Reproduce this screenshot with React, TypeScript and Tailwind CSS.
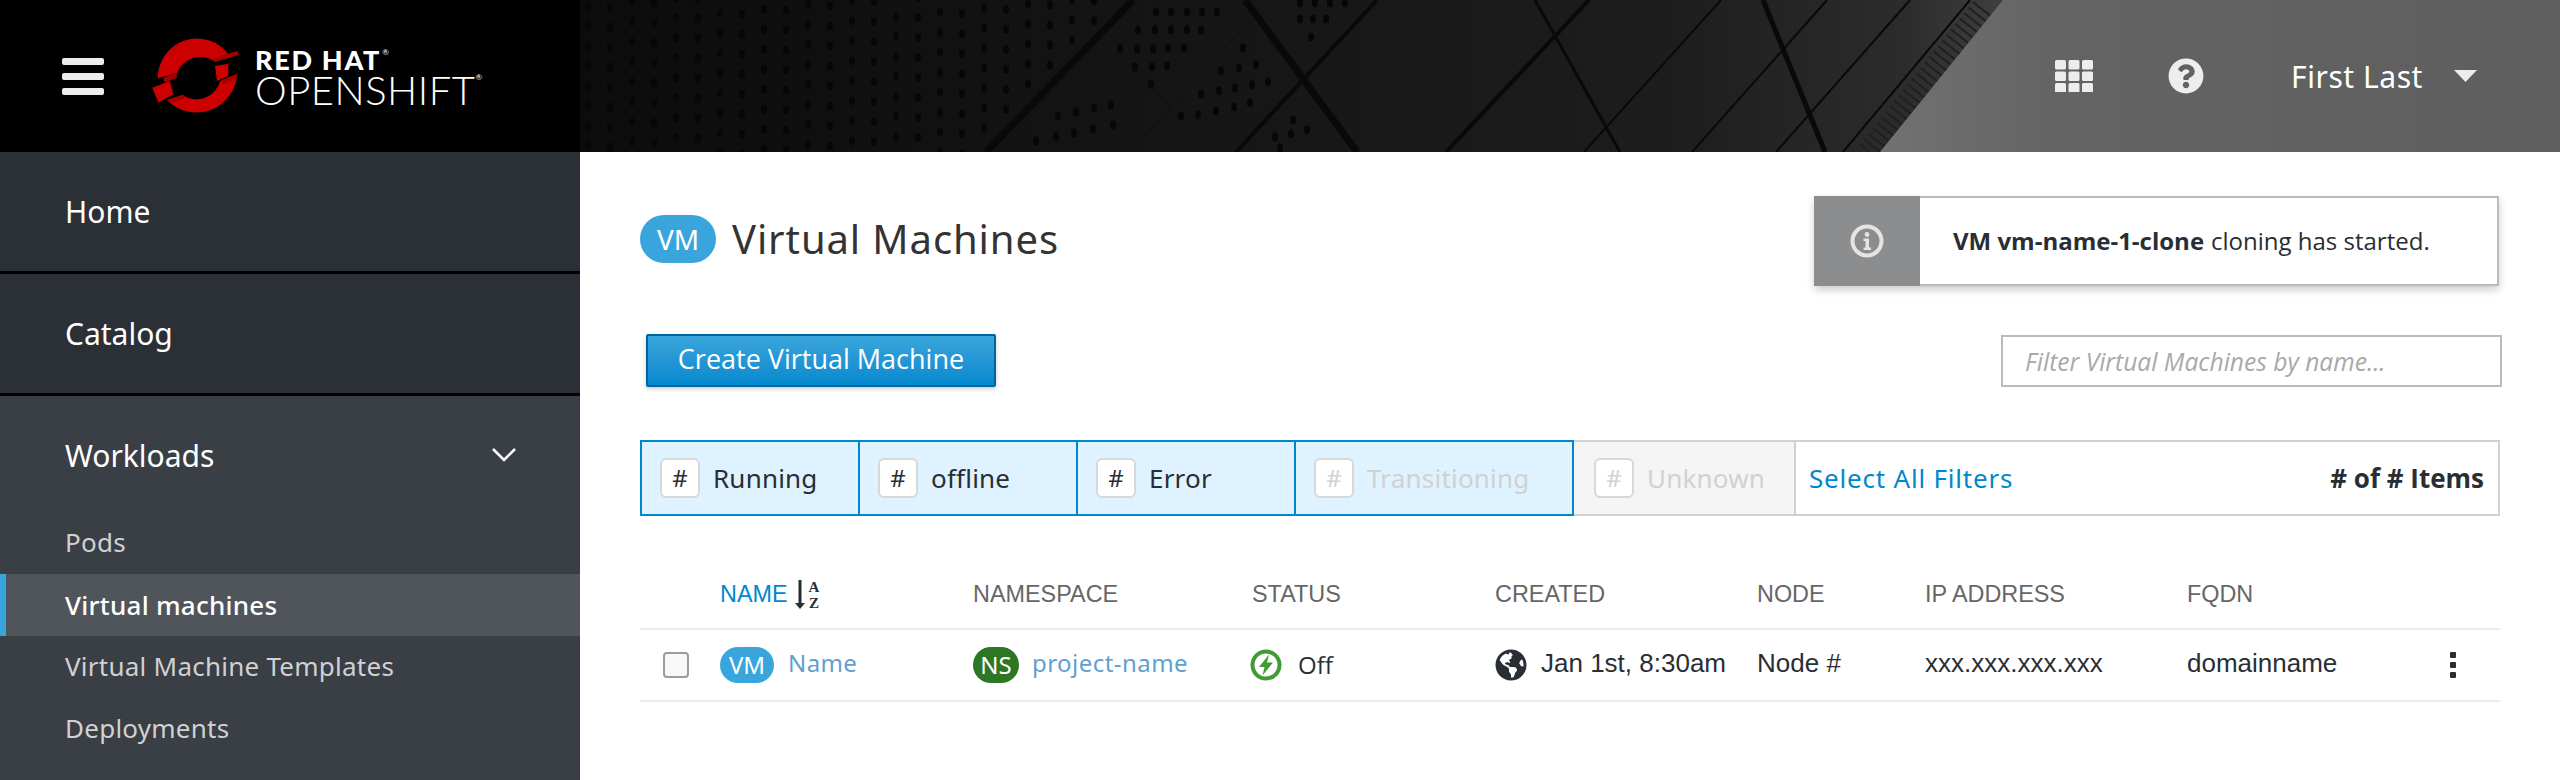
import { FaGlobeAmericas, FaQuestionCircle } from "react-icons/fa";

const uiFont = "font-['Noto_Sans',sans-serif]";
const bodyFont = "font-['Open_Sans',sans-serif]";
const tableFont = "font-['Liberation_Sans',Arial,sans-serif]";

// perforated panel, left of the first thick seam
const panelDots: Array<[number, number]> = [];
for (let col = 0; col < 26; col++) {
  for (let row = -1; row < 11; row++) {
    const x = 588 + col * 22;
    const y = 6 + row * 20 - col * 2.1 + (col % 2) * 3;
    if (y > -4 && y < 156 && x < 1122 - y * 0.97) panelDots.push([x, y]);
  }
}

// dot clusters between the seams, read off the reference
const clusterDots: Array<[number, number]> = [
  [1156, 12], [1171, 12], [1187, 12], [1202, 12], [1217, 12],
  [1138, 30], [1155, 30], [1171, 30], [1187, 30], [1201, 30],
  [1120, 49], [1137, 49], [1153, 49], [1168, 48], [1184, 48],
  [1135, 67], [1152, 67], [1167, 66],
  [1151, 84], [1243, 48], [1221, 71], [1239, 68], [1256, 65],
  [1201, 94], [1219, 91], [1235, 88], [1252, 85], [1268, 82],
  [1198, 115], [1216, 111], [1234, 107], [1250, 103], [1181, 116],
  [1058, 116], [1076, 112], [1094, 108], [1113, 125], [1111, 105],
  [1036, 141], [1056, 137], [1074, 133], [1093, 129],
  [1300, 3], [1315, 3], [1330, 3], [1345, 3], [1300, 19], [1313, 19], [1326, 19], [1311, 37],
  [1293, 120], [1275, 137], [1291, 134], [1307, 130], [1280, 148],
];

const seams: Array<[number, number, number, number, number]> = [
  [1133, 0, 986, 152, 7],
  [1245, 0, 1357, 152, 7],
  [1377, 0, 1236, 152, 4],
  [1589, 0, 1446, 152, 4],
  [1535, 0, 1620, 152, 3],
  [1721, 0, 1584, 152, 2],
  [1763, 0, 1825, 152, 5],
  [1827, 0, 1692, 152, 2],
  [1910, 0, 1776, 152, 2],
  [1970, 0, 1843, 152, 2],
];

function HeaderBackdrop() {
  return (
    <svg className="absolute inset-0 h-full w-full" viewBox="580 0 1980 152" preserveAspectRatio="none" aria-hidden="true">
      <defs>
        <linearGradient id="building" x1="0" x2="1" y1="0" y2="0">
          <stop offset="0" stopColor="#0c0c0c" />
          <stop offset="0.3" stopColor="#151515" />
          <stop offset="0.55" stopColor="#1d1d1d" />
          <stop offset="0.67" stopColor="#2c2c2c" />
          <stop offset="0.72" stopColor="#3f3f3f" />
          <stop offset="1" stopColor="#555555" />
        </linearGradient>
        <linearGradient id="sky" x1="0" x2="1" y1="0" y2="0">
          <stop offset="0" stopColor="#727272" />
          <stop offset="0.25" stopColor="#646464" />
          <stop offset="1" stopColor="#5e5e5e" />
        </linearGradient>
      </defs>
      <rect x="580" y="0" width="1980" height="152" fill="url(#building)" />
      {panelDots.concat(clusterDots).map(([x, y]) => (
        <ellipse key={`${x}-${y}`} cx={x} cy={y} rx="3" ry="4.4" fill="#070707" />
      ))}
      {seams.map(([x1, y1, x2, y2, w]) => (
        <line key={x1} x1={x1} y1={y1} x2={x2} y2={y2} stroke="#090909" strokeWidth={w} />
      ))}
      <line x1="1130" y1="62" x2="1210" y2="152" stroke="#101010" strokeWidth="1" />
      <line x1="1250" y1="20" x2="1130" y2="152" stroke="#101010" strokeWidth="1" />
      <line x1="1982" y1="8" x2="1868" y2="152" stroke="#202020" strokeWidth="22" strokeDasharray="2 5" />
      <polygon points="2003,0 1880,152 2560,152 2560,0" fill="url(#sky)" />
    </svg>
  );
}

function Logo() {
  return (
    <svg className="h-[90px] w-[100px] shrink-0" viewBox="0 0 300 270" aria-hidden="true">
      <path d="M38 142A118 120 0 0 1 250 70L210 92A75 75 0 0 0 96 126Z" fill="#cc0000" />
      <path d="M276 128A122 122 0 0 1 66 207L112 192A75 75 0 0 0 226 150Z" fill="#cc0000" />
      <polygon points="210,105 250,98 250,135 216,150" fill="#cc0000" />
      <polygon points="22,170 75,150 85,190 40,215" fill="#cc0000" />
      <polygon points="205,80 278,60 281,72 211,93" fill="#a30000" />
      <polygon points="55,141 95,125 96,140 58,155" fill="#a30000" />
      <polygon points="228,150 276,128 276,140 234,161" fill="#a30000" />
      <polygon points="66,207 114,191 122,200 86,214" fill="#a30000" />
    </svg>
  );
}

function CountBadge({ muted = false }: { muted?: boolean }) {
  return (
    <span
      className={`flex h-10 w-10 shrink-0 items-center justify-center rounded-md border-2 border-[#d8d8d8] bg-white text-[24px] ${
        muted ? "text-[#d1d1d1]" : "text-[#292e34]"
      }`}
    >
      #
    </span>
  );
}

const filters = [
  { label: "Running", width: "w-[220px]", muted: false },
  { label: "offline", width: "w-[218px]", muted: false },
  { label: "Error", width: "w-[218px]", muted: false },
  { label: "Transitioning", width: "w-[278px]", muted: true },
];

const navChildren = ["Pods", "Virtual machines", "Virtual Machine Templates", "Deployments"];

export default function App() {
  return (
    <div className="flex h-[780px] w-[2560px] flex-col overflow-hidden bg-white">
      <header className="flex h-[152px] shrink-0">
        <div className="flex w-[580px] shrink-0 items-center bg-black">
          <div className="ml-[62px] flex w-[42px] flex-col gap-[8px]">
            <span className="h-[7px] rounded-[2px] bg-[#ededed]" />
            <span className="h-[7px] rounded-[2px] bg-[#ededed]" />
            <span className="h-[7px] rounded-[2px] bg-[#ededed]" />
          </div>
          <div className="ml-[41px]">
            <Logo />
          </div>
          <div className="ml-[10px] mt-[2px] flex flex-col font-['Lato',sans-serif] text-white">
            <span className="flex h-[25px] items-start text-[27px] leading-[25px] font-black tracking-[1.7px]">
              RED HAT
              <span className="ml-[1px] text-[8px] leading-[10px] font-normal tracking-normal">®</span>
            </span>
            <span className="flex h-[36px] items-start text-[40px] leading-[36px] font-light tracking-[0.5px]">
              OPENSHIFT
              <span className="text-[8px] leading-[10px] font-normal tracking-normal">®</span>
            </span>
          </div>
        </div>
        <div className="relative flex flex-1 items-center justify-end">
          <HeaderBackdrop />
          <div className={`relative flex items-center pr-[83px] text-white ${uiFont}`}>
            <svg className="h-[32px] w-[38px]" viewBox="0 0 38 32" fill="#ededed" aria-hidden="true">
              {[0, 13.5, 27].map((x) =>
                [0, 11.5, 23].map((y) => <rect key={`${x}${y}`} x={x} y={y} width="11" height="9.5" rx="1.5" />),
              )}
            </svg>
            <FaQuestionCircle className="ml-[75px] h-[36px] w-[36px] text-[#ededed]" />
            <span className="ml-[87px] pt-[2px] text-[30px] leading-none tracking-[0.55px]">First Last</span>
            <svg className="ml-[31px] h-[12px] w-[23px]" viewBox="0 0 23 12" fill="#ededed" aria-hidden="true">
              <polygon points="0,0 23,0 11.5,12" />
            </svg>
          </div>
        </div>
      </header>

      <div className="flex flex-1">
        <aside className={`w-[580px] shrink-0 bg-[#3a3e45] ${uiFont}`}>
          {["Home", "Catalog"].map((item) => (
            <div
              key={item}
              className="flex h-[122px] items-center border-b-[3px] border-black bg-[#2b2f36] pl-[65px] text-[30px] text-white"
            >
              {item}
            </div>
          ))}
          <div className="flex h-[116px] items-center justify-between pl-[65px] pr-[64px] pt-[2px] text-[30px] text-white">
            Workloads
            <svg className="h-[14px] w-[24px]" viewBox="0 0 24 14" fill="none" stroke="#ffffff" strokeWidth="2.5" aria-hidden="true">
              <polyline points="1,1 12,12 23,1" />
            </svg>
          </div>
          {navChildren.map((item) => {
            const active = item === "Virtual machines";
            return (
              <div
                key={item}
                className={`flex h-[62px] items-center text-[26px] tracking-[0.25px] ${
                  active
                    ? "border-l-[6px] border-[#39a5dc] bg-[#50545b] pl-[59px] font-medium text-white"
                    : "pb-[2px] pl-[65px] text-[#d1d1d1]"
                }`}
              >
                {item}
              </div>
            );
          })}
        </aside>

        <main className="flex-1 px-[60px] pt-[44px]">
          <div className="flex items-center justify-between">
            <div className={`flex items-center pb-[5px] ${uiFont}`}>
              <span className="flex h-12 w-[76px] items-center justify-center rounded-[24px] bg-[#39a5dc] text-[28px] text-white">
                VM
              </span>
              <h1 className="ml-[16px] text-[40px] leading-none tracking-[0.9px] text-[#333333]">Virtual Machines</h1>
            </div>
            <div className="mr-px flex h-[90px] w-[685px] border-2 border-[#bbbbbb] bg-white shadow-[0_4px_8px_rgba(0,0,0,0.2)]">
              <div className="-my-[2px] -ml-[2px] flex w-[106px] items-center justify-center bg-[#8b8d8f]">
                <svg className="h-[34px] w-[34px]" viewBox="0 0 34 34" fill="#e4e4e4" aria-hidden="true">
                  <circle cx="17" cy="17" r="14.5" fill="none" stroke="#e4e4e4" strokeWidth="4" />
                  <circle cx="17" cy="10.5" r="2.4" />
                  <path d="M13.5 14.5h5.5v9h2v2.5h-7.5v-2.5h2v-6.500h-2z" />
                </svg>
              </div>
              <p className={`ml-[33px] flex items-center text-[24px] text-[#292e34] ${bodyFont}`}>
                <strong className="font-bold">VM vm-name-1-clone</strong>
                <span className="ml-[7px]">cloning has started.</span>
              </p>
            </div>
          </div>

          <div className="mt-[48px] flex items-center justify-between">
            <button
              className={`ml-[6px] h-[53px] w-[350px] rounded-[2px] border-2 border-[#00659c] bg-gradient-to-b from-[#39a5dc] to-[#0088ce] pb-[2px] text-[27px] text-white shadow-[0_2px_4px_rgba(0,0,0,0.2)] ${bodyFont}`}
            >
              Create Virtual Machine
            </button>
            <input
              className={`-mr-[2px] h-[52px] w-[501px] border-2 border-[#bbbbbb] bg-white pl-[22px] pt-[2px] text-[24.6px] italic outline-none placeholder:text-[#a9a9a9] ${bodyFont}`}
              placeholder="Filter Virtual Machines by name..."
              readOnly
            />
          </div>

          <div className={`mt-[53px] flex h-[76px] ${uiFont} text-[26px]`}>
            {filters.map((filter, index) => (
              <div
                key={filter.label}
                className={`flex ${filter.width} items-center border-y-2 border-r-2 border-[#0088ce] bg-[#def3ff] pl-[18px] ${
                  index === 0 ? "border-l-2" : ""
                }`}
              >
                <CountBadge muted={filter.muted} />
                <span className={`ml-[13px] tracking-[0.2px] ${filter.muted ? "text-[#d1d1d1]" : "text-[#292e34]"}`}>
                  {filter.label}
                </span>
              </div>
            ))}
            <div className="flex w-[222px] items-center border-y-2 border-r-2 border-[#d1d1d1] bg-[#f5f5f5] pl-[20px]">
              <CountBadge muted />
              <span className="ml-[13px] tracking-[0.2px] text-[#d1d1d1]">Unknown</span>
            </div>
            <div className="flex flex-1 items-center justify-between border-y-2 border-r-2 border-[#d1d1d1] pl-[13px] pr-[14px]">
              <span className="tracking-[0.8px] text-[#0088ce]">Select All Filters</span>
              <span className={`text-[26px] font-bold text-[#292e34] ${bodyFont}`}>
                # of # Items
              </span>
            </div>
          </div>

          <table className={`mt-[42px] w-full table-fixed ${tableFont}`}>
            <thead>
              <tr className="h-[71px] border-b-2 border-[#ededed] text-left text-[23.4px] font-normal text-[#666666]">
                <th className="w-[80px] font-normal" />
                <th className="w-[253px] pt-[4px] font-normal text-[#0088ce]">
                  <span className="inline-flex items-center gap-[7px]">
                    NAME
                    <svg className="h-[30px] w-[26px]" viewBox="0 0 26 30" aria-hidden="true">
                      <path d="M3.500 0h3v23h3.500l-5 6-5-6h3.500z" fill="#292e34" />
                      <text x="19" y="12" textAnchor="middle" fontFamily="Liberation Serif" fontWeight="700" fontSize="15" fill="#292e34">A</text>
                      <text x="19" y="28" textAnchor="middle" fontFamily="Liberation Serif" fontWeight="700" fontSize="15" fill="#292e34">Z</text>
                    </svg>
                  </span>
                </th>
                <th className="w-[279px] pt-[4px] font-normal">NAMESPACE</th>
                <th className="w-[243px] pt-[4px] font-normal">STATUS</th>
                <th className="w-[262px] pt-[4px] font-normal">CREATED</th>
                <th className="w-[168px] pt-[4px] font-normal">NODE</th>
                <th className="w-[262px] pt-[4px] font-normal">IP ADDRESS</th>
                <th className="pt-[4px] font-normal">FQDN</th>
              </tr>
            </thead>
            <tbody>
              <tr className="h-[72px] border-b-2 border-[#ededed] text-[26px] text-[#292e34]">
                <td>
                  <span className="ml-[23px] block h-[26px] w-[26px] rounded-[4px] border-2 border-[#9c9c9c] bg-[#f8f8f8]" />
                </td>
                <td>
                  <span className={`flex items-center text-[24px] ${uiFont}`}>
                    <span className="flex h-9 w-[54px] items-center justify-center rounded-[18px] bg-[#39a5dc] text-white">VM</span>
                    <span className="ml-[14px] pb-[4px] tracking-[0.4px] text-[#5f9fd3]">Name</span>
                  </span>
                </td>
                <td>
                  <span className={`flex items-center text-[24px] ${uiFont}`}>
                    <span className="flex h-9 w-[46px] items-center justify-center rounded-[18px] bg-[#2d7623] text-white">NS</span>
                    <span className="ml-[13px] pb-[4px] tracking-[0.45px] text-[#5f9fd3]">project-name</span>
                  </span>
                </td>
                <td>
                  <span className={`flex items-center text-[24px] ${bodyFont}`}>
                    <svg className="-ml-[2px] h-8 w-8" viewBox="0 0 32 32" aria-hidden="true">
                      <circle cx="16" cy="16" r="13.500" fill="none" stroke="#3f9c35" strokeWidth="4" />
                      <polygon points="19,5.500 9,18 14.500,18 12.500,26.500 23,13.500 17,13.500" fill="#3f9c35" />
                    </svg>
                    <span className="ml-[16px]">Off</span>
                  </span>
                </td>
                <td>
                  <span className="flex items-center">
                    <FaGlobeAmericas className="h-8 w-8 shrink-0 text-[#292e34]" />
                    <span className="ml-[14px] whitespace-nowrap pb-[4px] text-[26px]">Jan 1st, 8:30am</span>
                  </span>
                </td>
                <td>
                  <span className="block pb-[4px]">Node #</span>
                </td>
                <td>
                  <span className="block pb-[4px]">xxx.xxx.xxx.xxx</span>
                </td>
                <td>
                  <div className="flex items-center justify-between pr-[44px]">
                    <span className="pb-[4px]">domainname</span>
                    <span className="flex flex-col gap-[4px]">
                      <span className="h-[6px] w-[6px] rounded-[1px] bg-[#292e34]" />
                      <span className="h-[6px] w-[6px] rounded-[1px] bg-[#292e34]" />
                      <span className="h-[6px] w-[6px] rounded-[1px] bg-[#292e34]" />
                    </span>
                  </div>
                </td>
              </tr>
            </tbody>
          </table>
        </main>
      </div>
    </div>
  );
}
